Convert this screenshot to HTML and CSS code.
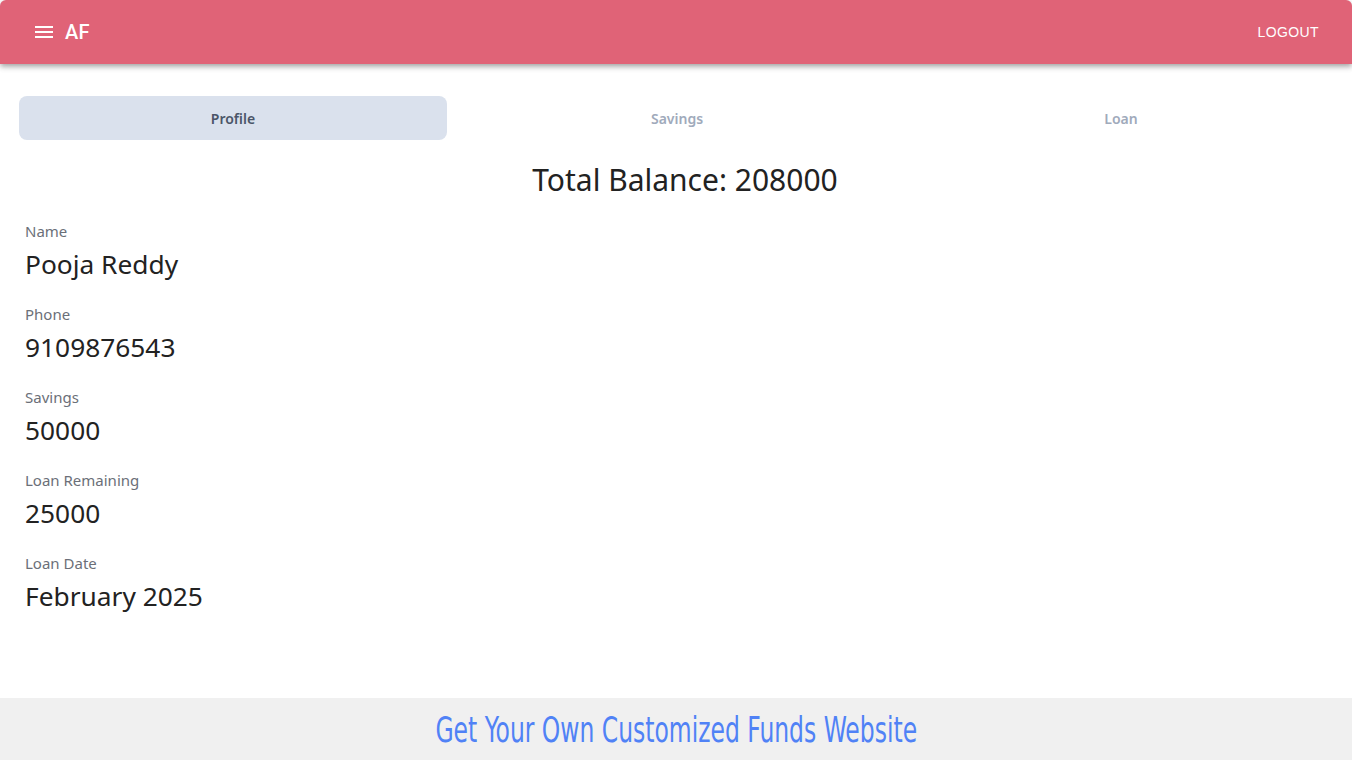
FILE: index.html
```html
<!DOCTYPE html>
<html lang="en">
<head>
<meta charset="utf-8">
<title>AF</title>
<link rel="stylesheet" href="styles.css">
</head>
<body>
<header class="appbar">
  <div class="brand">
    <button class="menu-btn" aria-label="menu">
      <svg viewBox="0 0 24 24" width="24" height="24"><path d="M3 18h18v-2H3v2zm0-5h18v-2H3v2zm0-7v2h18V6H3z" fill="#fff"/></svg>
    </button>
    <span class="brand-name">AF</span>
  </div>
  <button class="logout">Logout</button>
</header>

<main class="content">
  <nav class="tabs">
    <button class="tab active">Profile</button>
    <button class="tab">Savings</button>
    <button class="tab">Loan</button>
  </nav>

  <h2 class="total">Total Balance: 208000</h2>

  <dl class="fields">
    <div class="field"><dt>Name</dt><dd>Pooja Reddy</dd></div>
    <div class="field"><dt>Phone</dt><dd>9109876543</dd></div>
    <div class="field"><dt>Savings</dt><dd>50000</dd></div>
    <div class="field"><dt>Loan Remaining</dt><dd>25000</dd></div>
    <div class="field"><dt>Loan Date</dt><dd>February 2025</dd></div>
  </dl>
</main>

<footer class="footer">
  <span class="footer-text">Get Your Own Customized Funds Website</span>
</footer>
</body>
</html>
```

FILE: styles.css
```css
* { box-sizing: border-box; }
html, body { height: 100%; }
body {
  margin: 0;
  font-family: "Noto Sans", "Open Sans", sans-serif;
  color: #222;
  background: #fff;
  display: flex;
  flex-direction: column;
  min-height: 760px;
}
button { font: inherit; border: 0; background: none; cursor: pointer; }

.appbar {
  height: 64px;
  background: #e06377;
  border-radius: 6px 6px 0 0;
  box-shadow: 0 2px 4px -1px rgba(0,0,0,.2), 0 4px 5px 0 rgba(0,0,0,.14), 0 1px 10px 0 rgba(0,0,0,.12);
  display: flex;
  align-items: center;
  justify-content: space-between;
  padding: 0 25px 0 20px;
  color: #fff;
}
.brand { display: flex; align-items: center; gap: 0; }
.menu-btn { padding: 12px 9px 12px 12px; display: flex; }
.brand-name {
  font-family: Roboto, "Liberation Sans", sans-serif;
  font-size: 20px;
  font-weight: 500;
  letter-spacing: .2px;
}
.logout {
  color: #fff;
  font-family: "Liberation Sans", Arial, sans-serif;
  font-size: 14px;
  text-transform: uppercase;
  letter-spacing: .4px;
  padding: 6px 8px;
  margin-top: -1px;
}

.content {
  flex: 1;
  padding: 32px 17px 0 19px;
}
.tabs {
  display: grid;
  grid-template-columns: repeat(3, 1fr);
  gap: 16px;
}
.tab {
  height: 44px;
  border-radius: 8px;
  font-size: 14px;
  font-weight: 600;
  color: #a0aabb;
}
.tab.active { background: #dae1ed; color: #4a5568; }

.total {
  margin: 20px 0 0;
  padding-left: 16px;
  text-align: center;
  font-weight: 400;
  font-size: 30px;
  line-height: 40px;
  color: #222;
}

.fields { margin: 21px 0 0 6px; }
.field { margin-bottom: 22px; }
.field dt {
  font-size: 15px;
  line-height: 20px;
  color: #6b6f78;
}
.field dd {
  margin: 5px 0 0;
  font-size: 26.3px;
  line-height: 36px;
  color: #222;
}

.footer {
  height: 62px;
  background: #f0f0f0;
  display: flex;
  justify-content: center;
  align-items: center;
}
.footer-text {
  font-family: "DejaVu Sans Condensed", "DejaVu Sans", sans-serif;
  font-size: 35px;
  color: #5082f6;
  display: inline-block;
  transform: scaleX(0.745);
  margin-top: 2px;
}
```
